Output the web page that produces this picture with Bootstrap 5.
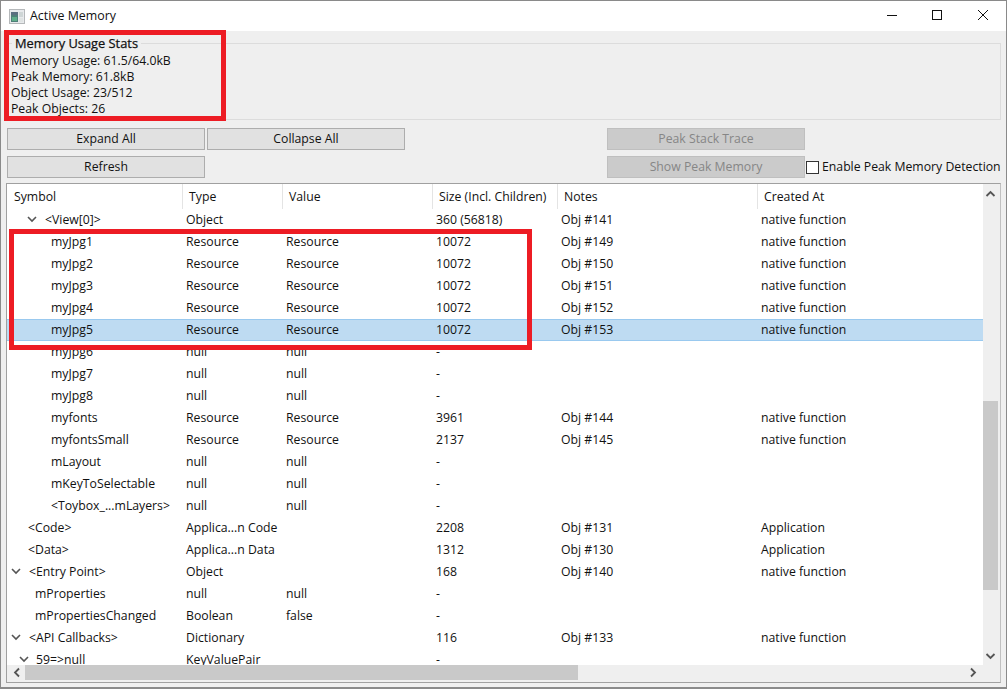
<!DOCTYPE html>
<html lang="en">
<head>
<meta charset="utf-8">
<title>Active Memory</title>
<link href="https://cdn.jsdelivr.net/npm/bootstrap@5.3.0/dist/css/bootstrap.min.css" rel="stylesheet">
<style>
html,body{margin:0;height:689px;overflow:hidden;background:#fff}
body{font:12.25px/16px "Open Sans","Noto Sans",sans-serif;color:#111}
.amw-win{position:relative;width:1007px;height:689px;border:solid #8a8a8a;border-width:1px 1px 2px 1px;background:#efefef;display:flex;flex-direction:column}
.amw-title{height:30px;background:#fff;display:flex;align-items:center;padding-left:8px;flex:none}
.amw-title span{margin-left:5px;font-size:12.4px}
.amw-ctrls{margin-left:auto;display:flex}
.amw-ctrls svg{width:46px;height:30px;display:block}
.amw-body{flex:1;padding:0 5px 4px 5px;display:flex;flex-direction:column;min-height:0}
fieldset.amw-group{border:1px solid #dcdcdc;height:86px;margin:3px 0 8px 0;padding:0 4px;flex:none;min-width:0}
fieldset.amw-group legend{float:none;width:auto;font-size:12.85px;line-height:16px;margin:0 0 1px 1px;padding:1px 3px;-webkit-text-stroke:.25px #111}
.amw-stat{line-height:16px}
.amw-btns{display:grid;grid-template-columns:repeat(4,198px) auto;column-gap:2px;row-gap:6px;padding-left:1px;flex:none}
.amw-btns .btn{height:22px;padding:0;font-size:12.25px;line-height:20px;border:1px solid #adadad;border-radius:0;background:#e1e1e1;color:#111}
.amw-btns .btn:disabled{opacity:1;background:#cbcbcb;border-color:#bfbfbf;color:#868686}
.amw-ph{height:22px}
.amw-check{display:flex;align-items:center;gap:3px;white-space:nowrap;margin:0 0 0 -1px}
.amw-box{width:13px;height:13px;border:1px solid #333;background:#fff;display:block;flex:none}
.amw-tree{margin-top:5px;flex:1;border:1px solid #a0a0a0;border-right-color:#c0c0c0;background:#fff;display:grid;grid-template-columns:976px 17px;grid-template-rows:481px 17px;min-height:0}
.amw-view{overflow:hidden;min-height:0;background:#fff}
.amw-tbl{table-layout:fixed;width:976px;border-collapse:collapse;margin:0}
.amw-tbl th,.amw-tbl td{padding:0 0 1px 4px;height:22px;line-height:21px;font-weight:400;white-space:nowrap;overflow:hidden;border:0;background:transparent;color:#111;vertical-align:middle}
.amw-tbl th{height:25px;padding:0 0 0 6.5px;line-height:21px;border-left:1px solid #e4e4e4;background:#fff}
.amw-tbl th:first-child{border-left:0;padding-left:7px}
.amw-tbl tr.amw-sel td{background:#bedbf2;box-shadow:inset 0 1px #99c9ef,inset 0 -1px #99c9ef}
.amw-tbl td:first-child{padding-left:0}
.amw-tbl td.amw-l0{padding-left:21px}
.amw-tbl td.amw-l0e{padding-left:4px}
.amw-tbl td.amw-l1{padding-left:28px}
.amw-tbl td.amw-l1e{padding-left:12px}
.amw-tbl td.amw-l2{padding-left:44px}
.amw-tbl td.amw-l2e{padding-left:20px}
.amw-chev{width:10px;height:7px;margin-right:7px;vertical-align:1px;display:inline-block}
.amw-chev-w{margin-right:8px}
.amw-vbar{background:#efefef;display:flex;flex-direction:column;justify-content:space-between;min-height:0}
.amw-hbar{background:#efefef;display:flex;align-items:flex-start;min-height:0}
.amw-arrow{width:15px;height:16px;flex:none;display:block}
.amw-harrow{width:18px;height:15px;flex:none;display:block}
.amw-vtrack{flex:1;display:flex;flex-direction:column;min-height:0}
.amw-vgap1{height:201px;flex:none}
.amw-vthumb{height:189px;width:15px;flex:none;background:#c9c9c9}
.amw-hthumb{width:553px;height:15px;background:#c9c9c9;flex:none}
.amw-hspace{flex:1}
.amw-corner{background:#efefef}
.amw-mark1,.amw-mark2{position:absolute;border:5px solid #ed1c24;pointer-events:none}
.amw-mark1{left:3px;top:29px;width:222px;height:91px}
.amw-mark2{left:8px;top:228px;width:523px;height:121px}
</style>
</head>
<body>
<div class="amw-win">
  <div class="amw-title">
    <svg width="16" height="15" viewBox="0 0 16 15"><rect x=".5" y=".5" width="15" height="14" fill="#e8eaec" stroke="#b5b8ba"/><rect x="2" y="3" width="7" height="10" fill="#4f7f78"/><rect x="2" y="3" width="7" height="3" fill="#5b6f80"/><rect x="3" y="8" width="5" height="4" fill="#5fae8a"/><rect x="10" y="3" width="4" height="5" fill="#cfd6d6"/><rect x="10" y="9" width="4" height="4" fill="#dfe3e3"/></svg>
    <span>Active Memory</span>
    <div class="amw-ctrls">
      <svg viewBox="0 0 46 30"><path d="M19 14.5h10" stroke="#111" fill="none"/></svg>
      <svg viewBox="0 0 46 30"><rect x="18.5" y="9.5" width="9" height="9" stroke="#111" fill="none"/></svg>
      <svg viewBox="0 0 46 30"><path d="M18 9l10 10M28 9l-10 10" stroke="#111" fill="none"/></svg>
    </div>
  </div>
  <div class="amw-body">
    <fieldset class="amw-group">
      <legend>Memory Usage Stats</legend>
      <div class="amw-stat">Memory Usage: 61.5/64.0kB</div>
      <div class="amw-stat">Peak Memory: 61.8kB</div>
      <div class="amw-stat">Object Usage: 23/512</div>
      <div class="amw-stat">Peak Objects: 26</div>
    </fieldset>
    <div class="amw-btns">
      <button class="btn" type="button">Expand All</button>
      <button class="btn" type="button">Collapse All</button>
      <div class="amw-ph"></div>
      <button class="btn" type="button" disabled>Peak Stack Trace</button>
      <div class="amw-ph"></div>
      <button class="btn" type="button">Refresh</button>
      <div class="amw-ph"></div>
      <div class="amw-ph"></div>
      <button class="btn" type="button" disabled>Show Peak Memory</button>
      <label class="amw-check"><span class="amw-box"></span>Enable Peak Memory Detection</label>
    </div>
    <div class="amw-tree">
      <div class="amw-view">
        <table class="amw-tbl">
          <colgroup><col style="width:175px"><col style="width:100px"><col style="width:150px"><col style="width:125px"><col style="width:200px"><col></colgroup>
          <thead><tr><th>Symbol</th><th>Type</th><th>Value</th><th>Size (Incl. Children)</th><th>Notes</th><th>Created At</th></tr></thead>
          <tbody>
            <tr><td class="amw-l2e"><svg class="amw-chev amw-chev-w" viewBox="0 0 10 7"><path d="M1 1l4 4 4-4" fill="none" stroke="#555" stroke-width="1.6"/></svg>&lt;View[0]&gt;</td><td>Object</td><td></td><td>360 (56818)</td><td>Obj #141</td><td>native function</td></tr>
            <tr><td class="amw-l2">myJpg1</td><td>Resource</td><td>Resource</td><td>10072</td><td>Obj #149</td><td>native function</td></tr>
            <tr><td class="amw-l2">myJpg2</td><td>Resource</td><td>Resource</td><td>10072</td><td>Obj #150</td><td>native function</td></tr>
            <tr><td class="amw-l2">myJpg3</td><td>Resource</td><td>Resource</td><td>10072</td><td>Obj #151</td><td>native function</td></tr>
            <tr><td class="amw-l2">myJpg4</td><td>Resource</td><td>Resource</td><td>10072</td><td>Obj #152</td><td>native function</td></tr>
            <tr class="amw-sel"><td class="amw-l2">myJpg5</td><td>Resource</td><td>Resource</td><td>10072</td><td>Obj #153</td><td>native function</td></tr>
            <tr><td class="amw-l2">myJpg6</td><td>null</td><td>null</td><td>-</td><td></td><td></td></tr>
            <tr><td class="amw-l2">myJpg7</td><td>null</td><td>null</td><td>-</td><td></td><td></td></tr>
            <tr><td class="amw-l2">myJpg8</td><td>null</td><td>null</td><td>-</td><td></td><td></td></tr>
            <tr><td class="amw-l2">myfonts</td><td>Resource</td><td>Resource</td><td>3961</td><td>Obj #144</td><td>native function</td></tr>
            <tr><td class="amw-l2">myfontsSmall</td><td>Resource</td><td>Resource</td><td>2137</td><td>Obj #145</td><td>native function</td></tr>
            <tr><td class="amw-l2">mLayout</td><td>null</td><td>null</td><td>-</td><td></td><td></td></tr>
            <tr><td class="amw-l2">mKeyToSelectable</td><td>null</td><td>null</td><td>-</td><td></td><td></td></tr>
            <tr><td class="amw-l2">&lt;Toybox_...mLayers&gt;</td><td>null</td><td>null</td><td>-</td><td></td><td></td></tr>
            <tr><td class="amw-l0">&lt;Code&gt;</td><td>Applica...n Code</td><td></td><td>2208</td><td>Obj #131</td><td>Application</td></tr>
            <tr><td class="amw-l0">&lt;Data&gt;</td><td>Applica...n Data</td><td></td><td>1312</td><td>Obj #130</td><td>Application</td></tr>
            <tr><td class="amw-l0e"><svg class="amw-chev amw-chev-w" viewBox="0 0 10 7"><path d="M1 1l4 4 4-4" fill="none" stroke="#555" stroke-width="1.6"/></svg>&lt;Entry Point&gt;</td><td>Object</td><td></td><td>168</td><td>Obj #140</td><td>native function</td></tr>
            <tr><td class="amw-l1">mProperties</td><td>null</td><td>null</td><td>-</td><td></td><td></td></tr>
            <tr><td class="amw-l1">mPropertiesChanged</td><td>Boolean</td><td>false</td><td>-</td><td></td><td></td></tr>
            <tr><td class="amw-l0e"><svg class="amw-chev amw-chev-w" viewBox="0 0 10 7"><path d="M1 1l4 4 4-4" fill="none" stroke="#555" stroke-width="1.6"/></svg>&lt;API Callbacks&gt;</td><td>Dictionary</td><td></td><td>116</td><td>Obj #133</td><td>native function</td></tr>
            <tr><td class="amw-l1e"><svg class="amw-chev" viewBox="0 0 10 7"><path d="M1 1l4 4 4-4" fill="none" stroke="#555" stroke-width="1.6"/></svg>59=&gt;null</td><td>KeyValuePair</td><td></td><td>-</td><td></td><td></td></tr>
          </tbody>
        </table>
      </div>
      <div class="amw-vbar">
        <svg class="amw-arrow" viewBox="0 0 15 16"><path d="M3.5 12l4-4 4 4" fill="none" stroke="#555" stroke-width="1.8"/></svg>
        <div class="amw-vtrack"><div class="amw-vgap1"></div><div class="amw-vthumb"></div></div>
        <svg class="amw-arrow" viewBox="0 0 15 16"><path d="M3.5 5l4 4 4-4" fill="none" stroke="#555" stroke-width="1.8"/></svg>
      </div>
      <div class="amw-hbar">
        <svg class="amw-harrow" viewBox="0 0 18 15"><path d="M12 3.5l-4 4 4 4" fill="none" stroke="#555" stroke-width="1.8"/></svg>
        <div class="amw-hthumb"></div>
        <div class="amw-hspace"></div>
        <svg class="amw-harrow" viewBox="0 0 18 15"><path d="M6 3.5l4 4-4 4" fill="none" stroke="#555" stroke-width="1.8"/></svg>
      </div>
      <div class="amw-corner"></div>
    </div>
  </div>
  <div class="amw-mark1"></div>
  <div class="amw-mark2"></div>
</div>
</body>
</html>
